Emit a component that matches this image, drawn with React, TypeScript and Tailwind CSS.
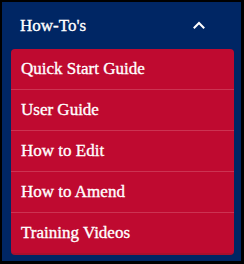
import React from "react";

const items = [
  "Quick Start Guide",
  "User Guide",
  "How to Edit",
  "How to Amend",
  "Training Videos",
];

const ChevronUp = () => (
  <svg width="12" height="8" viewBox="0 0 12 8" fill="none" className="block">
    <path
      d="M1.5 6.5 L6 2 L10.5 6.5"
      stroke="white"
      strokeWidth="2"
      strokeLinecap="square"
    />
  </svg>
);

export default function App() {
  return (
    <div className="h-[264px] w-[244px] bg-black pb-[3px] pl-[2px] pr-[3px] pt-[2px]">
      <div
        className="flex h-full flex-col bg-[#002664] pl-[9px] pr-[7px] [-webkit-text-stroke:0.35px_white]"
        style={{ fontFamily: '"Liberation Serif", "DejaVu Serif", serif' }}
      >
        <div className="flex h-[46px] items-center justify-between pl-[9px] pr-[29px]">
          <span className="text-[17px] leading-none text-white">How-To's</span>
          <ChevronUp />
        </div>
        <ul className="mt-px overflow-hidden rounded-[4px] border-b-2 border-[#a8102e] bg-[#bf0a30]">
          {items.map((label, i) => (
            <li
              key={label}
              className={
                i === 0
                  ? "flex h-[40px] items-center px-[10px] text-[17px] text-white"
                  : "flex h-[41px] items-center border-t border-[#cc3352] px-[10px] text-[17px] text-white"
              }
            >
              {label}
            </li>
          ))}
        </ul>
      </div>
    </div>
  );
}
